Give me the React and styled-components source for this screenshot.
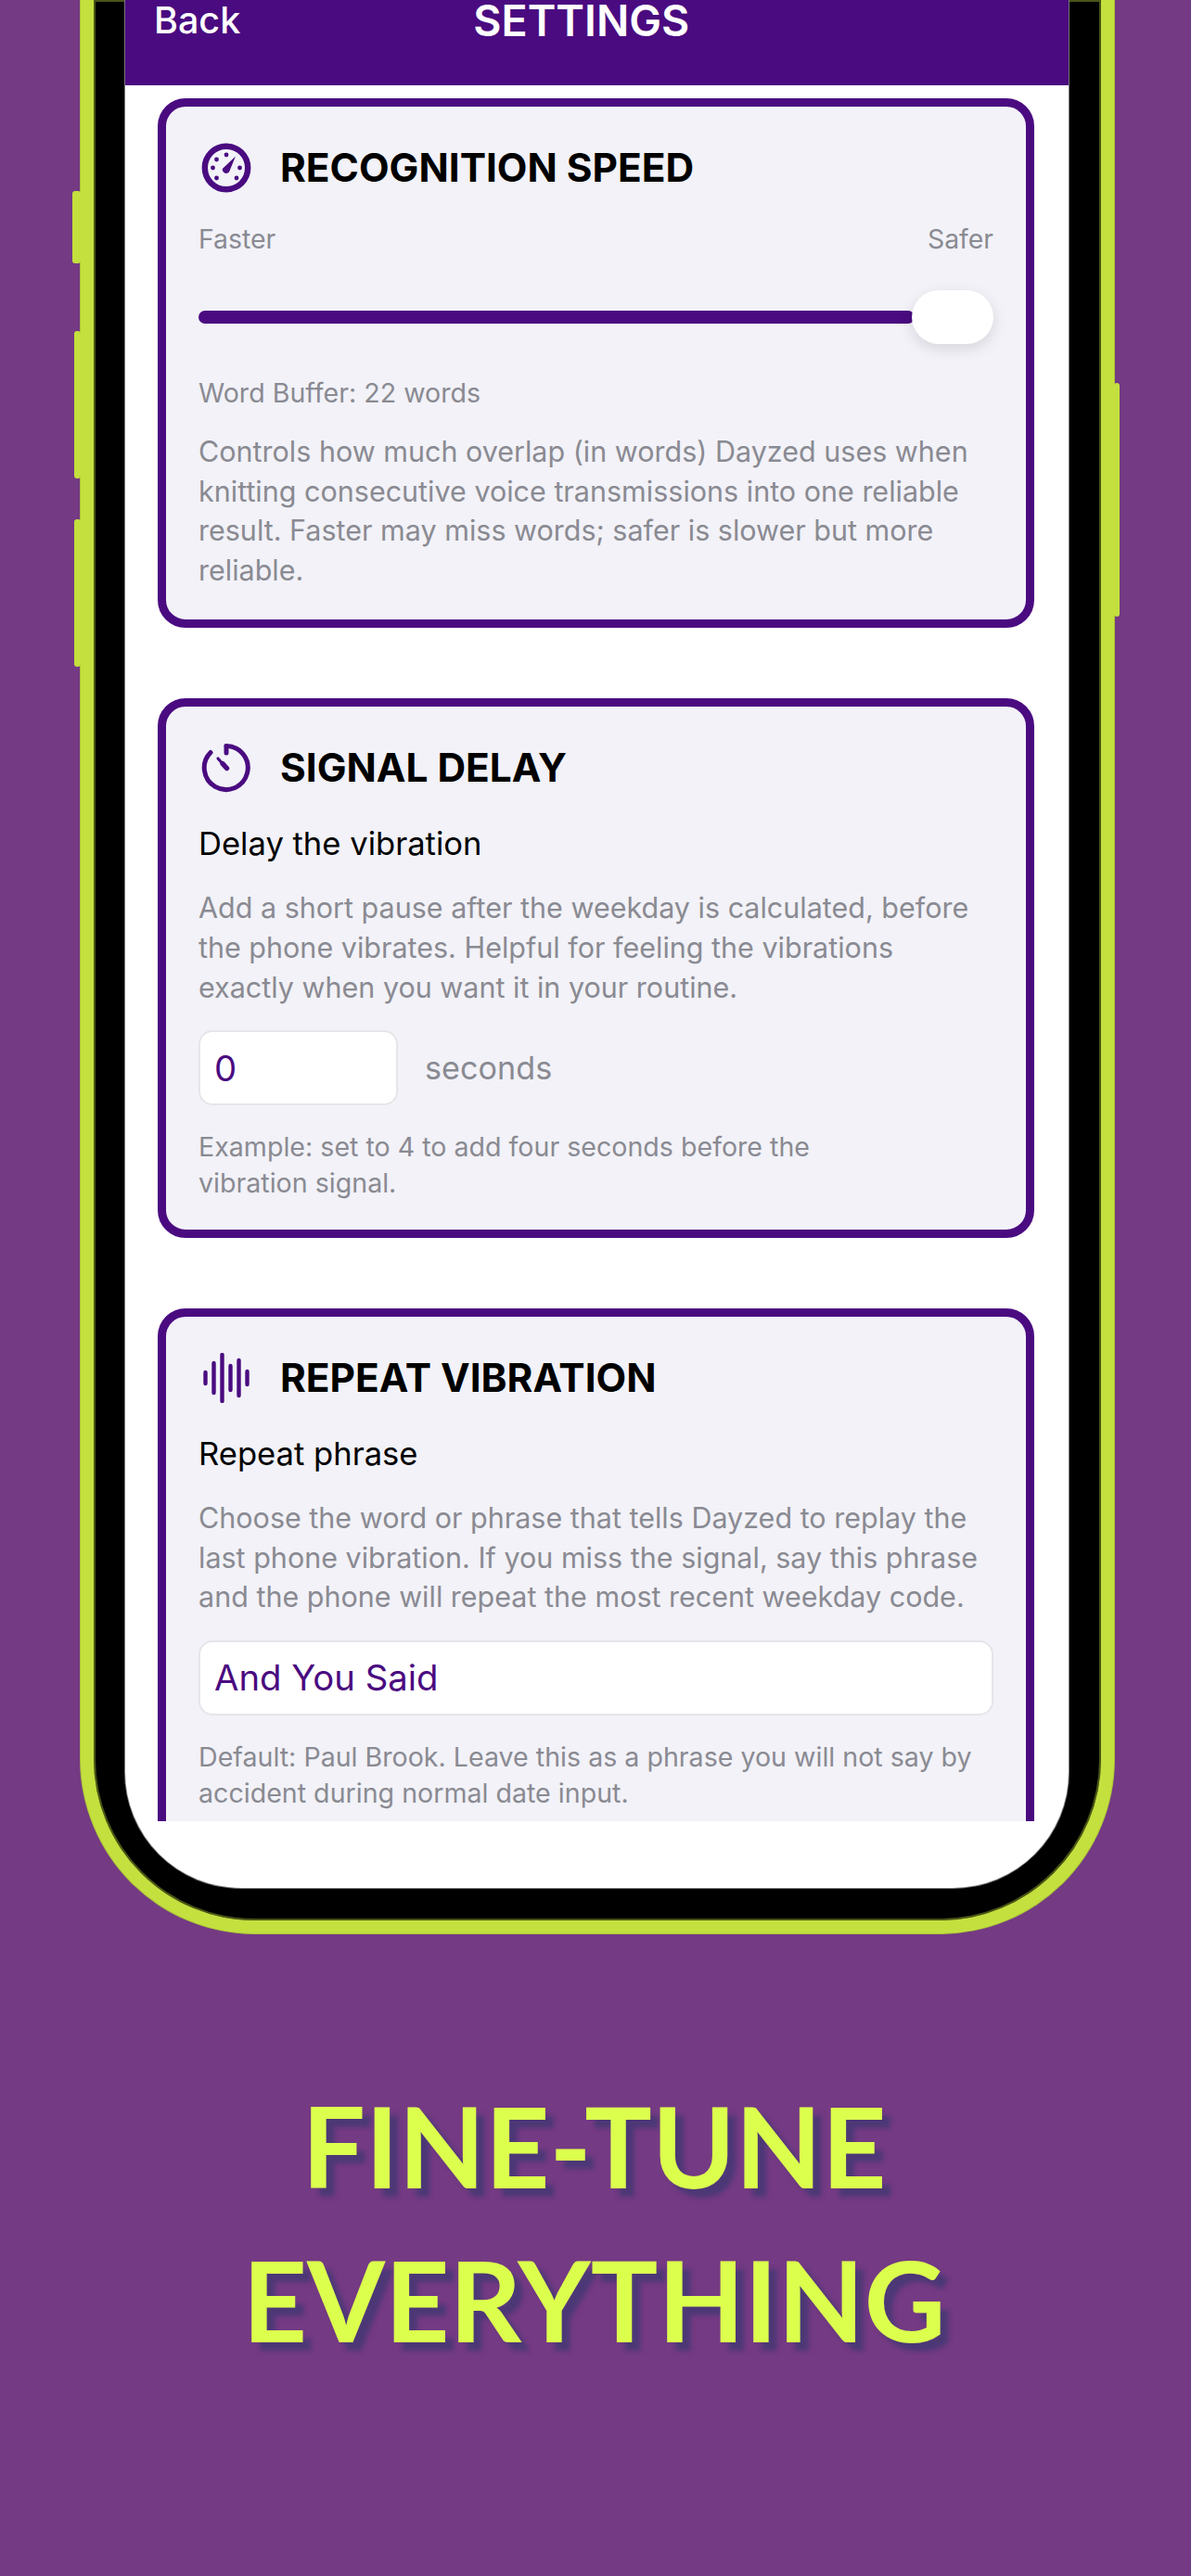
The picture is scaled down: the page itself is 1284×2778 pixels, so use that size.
import React from 'react';
import styled, { createGlobalStyle } from 'styled-components';

const GlobalStyle = createGlobalStyle`
  html, body {
    margin: 0;
    padding: 0;
    background: #743a83;
  }
  body {
    font-family: Inter, "Noto Sans", sans-serif;
  }
`;

const Page = styled.div`
  width: 1284px;
  height: 2778px;
  overflow: hidden;
  background: #743a83;
  display: flex;
  flex-direction: column;
`;

const PhoneSlot = styled.div`
  padding-left: 87px;
`;

const Phone = styled.div`
  position: relative;
  box-sizing: border-box;
  width: 1114px;
  height: 2085px;
  background: #000;
  border: 14px solid #c4e03f;
  border-top: 0;
  border-radius: 0 0 188px 188px;
  box-shadow: inset 0 0 0 2px #4a5516, 0 0 0 1px #a9c23a;
  padding: 0 35px 35px 34px;
  display: flex;
`;

const SideButton = styled.span`
  position: absolute;
  top: ${(p) => p.$top}px;
  height: ${(p) => p.$height}px;
  width: ${(p) => p.$width}px;
  ${(p) => (p.$right ? 'right: -20px;' : `left: -${p.$width + 14}px;`)}
  background: #c4e03f;
  border-radius: 3px;
`;

const Screen = styled.div`
  flex: 1;
  background: #fff;
  border-radius: 0 0 125px 125px;
  box-shadow: 0 0 0 1px #777;
  overflow: hidden;
  display: flex;
  flex-direction: column;
`;

const NavBar = styled.div`
  flex: none;
  box-sizing: border-box;
  height: 92px;
  background: #4a0b80;
  color: #fff;
  display: flex;
  align-items: flex-start;
  gap: 251px;
  padding-left: 31px;
`;

const BackLabel = styled.span`
  font-size: 39.5px;
  font-weight: 500;
  line-height: 44px;
`;

const NavTitle = styled.span`
  font-size: 46.5px;
  font-weight: 600;
  line-height: 44px;
`;

const ScrollArea = styled.div`
  flex: none;
  box-sizing: border-box;
  height: 1872px;
  overflow: hidden;
  padding: 14px 37px 0 35px;
  display: flex;
  flex-direction: column;
  gap: 76px;
`;

const Card = styled.section`
  flex: none;
  box-sizing: border-box;
  background: #f2f2f8;
  border: 9px solid #4a0b80;
  border-radius: 30px;
  padding: 39px 35px ${(p) => p.$bottom || 32}px;
  display: flex;
  flex-direction: column;
`;

const CardHeader = styled.div`
  display: flex;
  align-items: center;
  gap: 31px;
  height: 53px;
  padding-left: 3px;
`;

const CardTitle = styled.h2`
  margin: 0;
  font-size: 42.4px;
  font-weight: 700;
  color: #000;
`;

const IconSvg = styled.svg`
  flex: none;
  width: 54px;
  height: 54px;
  color: #4a0b80;
`;

const EndLabels = styled.div`
  display: flex;
  justify-content: space-between;
  margin-top: 34px;
  font-size: 28.4px;
  line-height: 34px;
  color: #8a8a92;
`;

const SliderRow = styled.div`
  position: relative;
  height: 58px;
  margin-top: 38px;
  display: flex;
  align-items: center;
`;

const SliderTrack = styled.div`
  width: 772px;
  height: 14px;
  border-radius: 7px;
  background: #4a0b80;
`;

const SliderThumb = styled.div`
  position: absolute;
  right: 0;
  top: 0;
  width: 88px;
  height: 58px;
  border-radius: 29px;
  background: #fff;
  box-shadow: 0 5px 16px rgba(0, 0, 0, 0.12);
`;

const SmallText = styled.p`
  margin: ${(p) => p.$top || 0}px 0 0;
  font-size: 28.6px;
  line-height: 39px;
  color: #8a8a92;
  max-width: ${(p) => p.$max || 'none'};
`;

const BodyText = styled.p`
  margin: ${(p) => p.$top || 0}px 0 0;
  font-size: 30.5px;
  line-height: 42.6px;
  color: #8a8a92;
`;

const FieldLabel = styled.div`
  margin-top: 33px;
  font-size: 34.6px;
  line-height: 44px;
  color: #000;
`;

const InputRow = styled.div`
  display: flex;
  align-items: center;
  gap: 29px;
  margin-top: 25px;
`;

const InputBox = styled.div`
  box-sizing: border-box;
  width: ${(p) => p.$width || '100%'};
  height: 81px;
  background: #fff;
  border: 2px solid #e5e5ea;
  border-radius: 15px;
  padding-left: 15px;
  display: flex;
  align-items: center;
  font-size: 38.3px;
  color: #4a0b80;
`;

const UnitLabel = styled.span`
  font-size: 34.2px;
  color: #8a8a92;
`;

const Caption = styled.h1`
  margin: 146px 0 0;
  padding-right: 3px;
  font-family: Lato, "Open Sans", sans-serif;
  font-size: 121px;
  font-weight: 700;
  line-height: 166px;
  text-align: center;
  color: #dcff4e;
  text-shadow: 9px 9px 5px rgba(50, 55, 110, 0.6);
`;

function GaugeIcon() {
  return (
    <IconSvg viewBox="0 0 54 54" fill="currentColor">
      <circle cx="27" cy="27" r="23.2" fill="none" stroke="currentColor" strokeWidth="6.4" />
      <circle cx="27" cy="13" r="2.4" />
      <circle cx="16.5" cy="18" r="2.4" />
      <circle cx="12.5" cy="27" r="2.4" />
      <circle cx="16.5" cy="38" r="2.4" />
      <circle cx="38" cy="38" r="2.4" />
      <circle cx="41.5" cy="27" r="2.4" />
      <path d="M37 14.5 L30 31.5 A4.2 4.2 0 0 1 22.8 28 Z" />
    </IconSvg>
  );
}

function TimerIcon() {
  return (
    <IconSvg viewBox="0 0 54 54" fill="none" stroke="currentColor" strokeLinecap="round">
      <path d="M27 3.5 A23.5 23.5 0 1 1 10 10.5" strokeWidth="5" />
      <path d="M27 3.5 V11" strokeWidth="5" />
      <path d="M27.5 27.5 L18 17" strokeWidth="3.2" />
      <path d="M27.5 27.5 L23 22.5" strokeWidth="5.4" />
    </IconSvg>
  );
}

function WaveIcon() {
  const bars = [
    [3, 19, 35],
    [12, 9, 45],
    [21, 0, 54],
    [30, 12, 42],
    [39, 6, 48],
    [48, 18, 36],
  ];
  return (
    <IconSvg viewBox="0 0 54 54" fill="none" stroke="currentColor" strokeWidth="4.4" strokeLinecap="round">
      {bars.map(([x, y1, y2]) => (
        <line key={x} x1={x + 1.5} x2={x + 1.5} y1={y1 + 2} y2={y2 - 2} />
      ))}
    </IconSvg>
  );
}

export default function App() {
  return (
    <Page>
      <GlobalStyle />
      <PhoneSlot>
        <Phone>
          <SideButton $top={206} $height={78} $width={9} />
          <SideButton $top={357} $height={159} $width={7} />
          <SideButton $top={560} $height={159} $width={7} />
          <SideButton $right $top={413} $height={252} $width={6} />
          <Screen>
            <NavBar>
              <BackLabel>Back</BackLabel>
              <NavTitle>SETTINGS</NavTitle>
            </NavBar>
            <ScrollArea>
              <Card>
                <CardHeader>
                  <GaugeIcon />
                  <CardTitle>RECOGNITION SPEED</CardTitle>
                </CardHeader>
                <EndLabels>
                  <span>Faster</span>
                  <span>Safer</span>
                </EndLabels>
                <SliderRow>
                  <SliderTrack />
                  <SliderThumb />
                </SliderRow>
                <SmallText $top={33}>Word Buffer: 22 words</SmallText>
                <BodyText $top={23}>
                  Controls how much overlap (in words) Dayzed uses when knitting consecutive voice transmissions into one reliable result. Faster may miss words; safer is slower but more reliable.
                </BodyText>
              </Card>
              <Card $bottom={31}>
                <CardHeader>
                  <TimerIcon />
                  <CardTitle>SIGNAL DELAY</CardTitle>
                </CardHeader>
                <FieldLabel>Delay the vibration</FieldLabel>
                <BodyText $top={27}>
                  Add a short pause after the weekday is calculated, before the phone vibrates. Helpful for feeling the vibrations exactly when you want it in your routine.
                </BodyText>
                <InputRow>
                  <InputBox $width="215px">0</InputBox>
                  <UnitLabel>seconds</UnitLabel>
                </InputRow>
                <SmallText $top={25} $max="700px">
                  Example: set to 4 to add four seconds before the vibration signal.
                </SmallText>
              </Card>
              <Card>
                <CardHeader>
                  <WaveIcon />
                  <CardTitle>REPEAT VIBRATION</CardTitle>
                </CardHeader>
                <FieldLabel>Repeat phrase</FieldLabel>
                <BodyText $top={27}>
                  Choose the word or phrase that tells Dayzed to replay the last phone vibration. If you miss the signal, say this phrase and the phone will repeat the most recent weekday code.
                </BodyText>
                <InputRow>
                  <InputBox>And You Said</InputBox>
                </InputRow>
                <SmallText $top={25}>
                  Default: Paul Brook. Leave this as a phrase you will not say by accident during normal date input.
                </SmallText>
              </Card>
            </ScrollArea>
          </Screen>
        </Phone>
      </PhoneSlot>
      <Caption>
        FINE-TUNE
        <br />
        EVERYTHING
      </Caption>
    </Page>
  );
}
